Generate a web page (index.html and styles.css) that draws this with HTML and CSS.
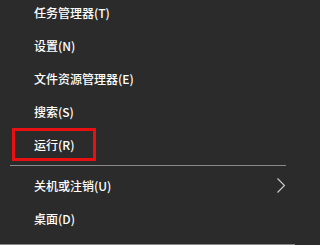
FILE: index.html
```html
<!DOCTYPE html>
<html lang="zh-CN">
<head>
<meta charset="utf-8">
<link rel="stylesheet" href="styles.css">
</head>
<body>
<div class="menu">
  <ul class="list">
    <li class="item">任务管理器(T)</li>
    <li class="item">设置(N)</li>
    <li class="item">文件资源管理器(E)</li>
    <li class="item">搜索(S)</li>
    <li class="item item-marked">运行(R)<span class="mark"></span></li>
    <li class="sep"><span class="sep-line"></span></li>
    <li class="item item-sub">关机或注销(U)
      <svg class="chev" width="8" height="15" viewBox="0 0 8 15"><polyline points="0.5,0.5 7.5,7.5 0.5,14.5" fill="none" stroke="#d0d0d0" stroke-width="1.1"/></svg>
    </li>
    <li class="item">桌面(D)</li>
  </ul>
</div>
</body>
</html>
```
FILE: styles.css
```css
html, body {
  margin: 0;
  padding: 0;
  background: #2b2b2b;
}
.menu {
  width: 295px;
  height: 244px;
  border-bottom: 1px solid #8a8a8a;
  background: #2b2b2b;
  overflow: hidden;
  font-family: "Noto Sans CJK SC", "Noto Sans", sans-serif;
  font-size: 12px;
  font-weight: 500;
  color: #ffffff;
}
.list {
  list-style: none;
  margin: -4px 0 0 0;
  padding: 0;
}
.item {
  position: relative;
  height: 33px;
  line-height: 33px;
  padding-left: 34px;
  white-space: nowrap;
}
.mark {
  position: absolute;
  left: 12px;
  top: 0;
  width: 78px;
  height: 27px;
  border: 3px solid #e81010;
}
.sep {
  padding: 4px 9px 3px 10px;
}
.sep-line {
  display: block;
  height: 1px;
  background: #8a8a8a;
}
.item-sub {
  display: flex;
  align-items: center;
  justify-content: space-between;
  padding-right: 10px;
}
.chev {
  display: block;
}
```
